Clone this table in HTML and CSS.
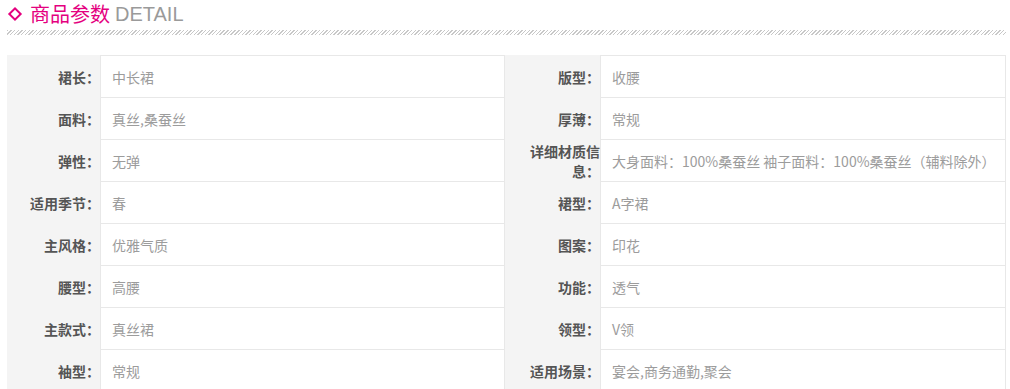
FILE: index.html
```html
<!DOCTYPE html>
<html lang="zh-CN">
<head>
<meta charset="utf-8">
<title>商品参数</title>
<link rel="stylesheet" href="styles.css">
</head>
<body>
<div class="page">
  <div class="title">
    <span class="diamond"></span>
    <span class="title-cn">商品参数</span>
    <span class="title-en">DETAIL</span>
  </div>
  <div class="stripe"></div>
  <div class="params">
    <div class="lbl">裙长：</div><div class="val first">中长裙</div>
    <div class="lbl">版型：</div><div class="val first">收腰</div>

    <div class="lbl">面料：</div><div class="val">真丝,桑蚕丝</div>
    <div class="lbl">厚薄：</div><div class="val">常规</div>

    <div class="lbl">弹性：</div><div class="val">无弹</div>
    <div class="lbl">详细材质信息：</div><div class="val">大身面料：100%桑蚕丝 袖子面料：100%桑蚕丝（辅料除外）</div>

    <div class="lbl">适用季节：</div><div class="val">春</div>
    <div class="lbl">裙型：</div><div class="val">A字裙</div>

    <div class="lbl">主风格：</div><div class="val">优雅气质</div>
    <div class="lbl">图案：</div><div class="val">印花</div>

    <div class="lbl">腰型：</div><div class="val">高腰</div>
    <div class="lbl">功能：</div><div class="val">透气</div>

    <div class="lbl">主款式：</div><div class="val">真丝裙</div>
    <div class="lbl">领型：</div><div class="val">V领</div>

    <div class="lbl">袖型：</div><div class="val">常规</div>
    <div class="lbl">适用场景：</div><div class="val">宴会,商务通勤,聚会</div>
  </div>
</div>
</body>
</html>
```

FILE: styles.css
```css
html, body {
  margin: 0;
  padding: 0;
  background: #ffffff;
}

body {
  font-family: "Noto Sans CJK SC", "Noto Sans", sans-serif;
}

.page {
  margin-left: 7px;
  width: 999px;
}

.title {
  display: flex;
  align-items: center;
  height: 30px;
  padding-left: 3px;
}

.diamond {
  width: 6px;
  height: 6px;
  border: 2px solid #e4007f;
  transform: rotate(45deg);
  margin-right: 10px;
  margin-top: -3px;
}

.title-cn {
  font-size: 20px;
  color: #e4007f;
  line-height: 28px;
  margin-top: -3px;
}

.title-en {
  font-family: "Liberation Sans", "Noto Sans", sans-serif;
  font-size: 20px;
  color: #9a9a9a;
  line-height: 28px;
  margin-left: 5px;
  margin-top: -3px;
}

.stripe {
  height: 5px;
  background: repeating-linear-gradient(135deg, #c8c8c8 0 1px, transparent 1px 2.6px);
  margin-bottom: 20px;
}

.params {
  display: grid;
  grid-template-columns: 93px 405px 95px 406px;
}

.lbl {
  background: #f4f4f4;
  display: flex;
  align-items: center;
  justify-content: flex-end;
  text-align: right;
  font-size: 14px;
  font-weight: bold;
  color: #555555;
  line-height: 20px;
}

.val {
  display: flex;
  align-items: center;
  height: 42px;
  padding-left: 11px;
  box-sizing: border-box;
  border-left: 1px solid #e8e8e8;
  border-right: 1px solid #e8e8e8;
  border-bottom: 1px solid #e8e8e8;
  font-size: 14px;
  color: #9c9c9c;
  line-height: 20px;
  white-space: nowrap;
}

.val.first {
  height: 43px;
  border-top: 1px solid #e8e8e8;
}
```
